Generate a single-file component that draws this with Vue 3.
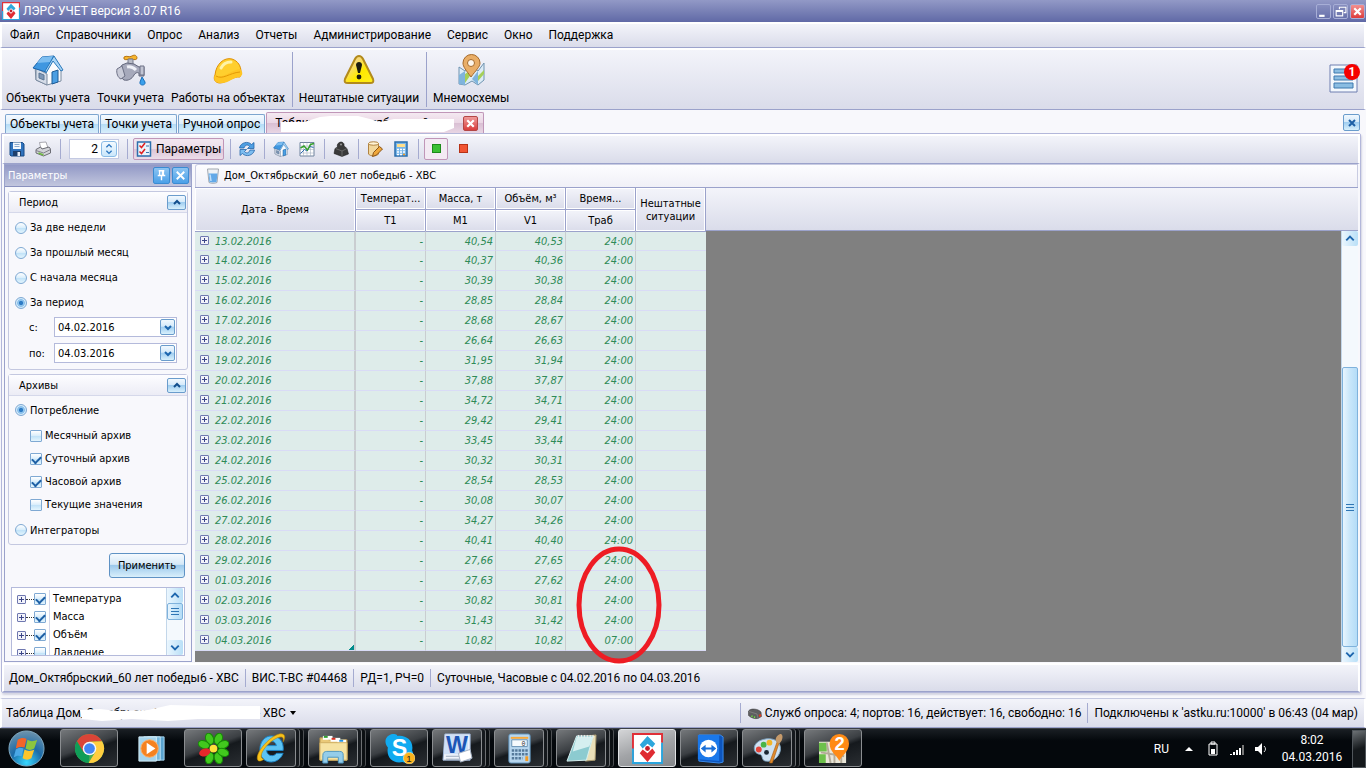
<script setup>
import { ref } from 'vue';

const menu = ['Файл', 'Справочники', 'Опрос', 'Анализ', 'Отчеты', 'Администрирование', 'Сервис', 'Окно', 'Поддержка'];

const tools = [
  { label: 'Объекты учета', icon: 'house' },
  { label: 'Точки учета', icon: 'tap' },
  { label: 'Работы на объектах', icon: 'helmet' },
  { label: 'Нештатные ситуации', icon: 'warning', sep: true },
  { label: 'Мнемосхемы', icon: 'map', sep: true },
];

const tabs = ['Объекты учета', 'Точки учета', 'Ручной опрос'];

const periods = ['За две недели', 'За прошлый месяц', 'С начала месяца', 'За период'];
const period = ref('За период');
const dateFrom = ref('04.02.2016');
const dateTo = ref('04.03.2016');

const kind = ref('consumption');
const archives = ref([
  { label: 'Месячный архив', on: false },
  { label: 'Суточный архив', on: true },
  { label: 'Часовой архив', on: true },
  { label: 'Текущие значения', on: false },
]);

const params = ref([
  { label: 'Температура', on: true },
  { label: 'Масса', on: true },
  { label: 'Объём', on: true },
  { label: 'Давление', on: false },
]);

const count = ref(2);

// date, M1, V1, working time
const rows = [
  ['13.02.2016', '40,54', '40,53', '24:00'],
  ['14.02.2016', '40,37', '40,36', '24:00'],
  ['15.02.2016', '30,39', '30,38', '24:00'],
  ['16.02.2016', '28,85', '28,84', '24:00'],
  ['17.02.2016', '28,68', '28,67', '24:00'],
  ['18.02.2016', '26,64', '26,63', '24:00'],
  ['19.02.2016', '31,95', '31,94', '24:00'],
  ['20.02.2016', '37,88', '37,87', '24:00'],
  ['21.02.2016', '34,72', '34,71', '24:00'],
  ['22.02.2016', '29,42', '29,41', '24:00'],
  ['23.02.2016', '33,45', '33,44', '24:00'],
  ['24.02.2016', '30,32', '30,31', '24:00'],
  ['25.02.2016', '28,54', '28,53', '24:00'],
  ['26.02.2016', '30,08', '30,07', '24:00'],
  ['27.02.2016', '34,27', '34,26', '24:00'],
  ['28.02.2016', '40,41', '40,40', '24:00'],
  ['29.02.2016', '27,66', '27,65', '24:00'],
  ['01.03.2016', '27,63', '27,62', '24:00'],
  ['02.03.2016', '30,82', '30,81', '24:00'],
  ['03.03.2016', '31,43', '31,42', '24:00'],
  ['04.03.2016', '10,82', '10,82', '07:00'],
];

const taskbar = [
  { name: 'Chrome', icon: 'chrome' },
  { name: 'Media Player', icon: 'media', idle: true },
  { name: 'ICQ', icon: 'icq' },
  { name: 'Internet Explorer', icon: 'ie', stack: true },
  { name: 'Проводник', icon: 'folder', stack: true },
  { name: 'Skype', icon: 'skype' },
  { name: 'Word', icon: 'word', stack: true },
  { name: 'Калькулятор', icon: 'calculator', stack: true },
  { name: 'Блокнот', icon: 'notepad', stack: true },
  { name: 'ЛЭРС УЧЕТ', icon: 'lers', active: true },
  { name: 'TeamViewer', icon: 'teamviewer' },
  { name: 'Paint', icon: 'paint', stack: true },
  { name: '2ГИС', icon: 'gis' },
];

// all icons are drawn on a 32x32 canvas
const icons = {
  house: '<path d="M3 12l1 14 11 5 14-4V15L22 4z" fill="#fafbfd" stroke="#7b8ba0"/><path d="M4 14v12l11 5V20z" fill="#d5dce8" stroke="#7b8ba0"/><path d="M10 3l12-1-8 16-13-4z" fill="#3f97e0" stroke="#1a64ab"/><path d="M10 3l11-1-3 6L5 9z" fill="#7cbdf0"/><path d="M22 2l9 14-2 1-8-10-7 12-1-2z" fill="#a9d5f6" stroke="#2877ba"/><path d="M20 18l6-2v12l-6 2z" fill="#4b9fe3" stroke="#1d5c97"/><path d="M7 19l5 2v5l-5-2z" fill="#7d97b6" stroke="#5d7795"/>',
  tap: '<path d="M9 3c3-2 5 1 8-1s5 0 5 2-3 2-5 1-6 2-8 0z" fill="#f7b52d" stroke="#b87510"/><path d="M13 5h5v6h-5z" fill="#b8bbc6" stroke="#777b8c"/><path d="M7 11l5-2 7 1 5 3h5v9h-5v-3c-2-1-4 0-5 2-2 4-6 6-10 5C5 24 4 15 7 11z" fill="#a6a9bb" stroke="#63677c"/><path d="M2 15l5-3 3 10-4 3C3 24 1 19 2 15z" fill="#c9cbd8" stroke="#6c7085"/><path d="M25 12l4 0v9h-4z" fill="#c2c5d3" stroke="#6c7085"/><path d="M12 13c4-1 7 1 9 3" stroke="#eef0f7" stroke-width="3" fill="none"/><path d="M27 23l3 5c1 4-6 4-5 0z" fill="#3aa0ec" stroke="#1770bb"/>',
  helmet: '<path d="M3 21C4 10 12 3 20 5c6 2 9 7 9 13l-1 5c-7-1-14 6-20 6-5 0-7-4-5-8z" fill="#ffcf2e" stroke="#e09000"/><path d="M3 21c7 5 14-4 25-6 3 3 3 6 0 8-7 0-12 7-20 6-5 0-7-4-5-8z" fill="#ffc524"/><path d="M4 22c7 4 13-3 24-4" stroke="#e39a07" fill="none"/><path d="M9 14c2-4 6-6 10-6" stroke="#fff3a8" stroke-width="3" fill="none" stroke-linecap="round"/>',
  warning: '<defs><linearGradient id="wg" x1="0" y1="0" x2="1" y2="1"><stop offset=".3" stop-color="#f7d977"/><stop offset=".6" stop-color="#ffe900"/><stop offset="1" stop-color="#ffee20"/></linearGradient></defs><path d="M16 2c2 0 3 1 4 3l10 20c1 3 0 4-3 4H5c-3 0-4-1-3-4L12 5c1-2 2-3 4-3z" fill="url(#wg)" stroke="#b28a1c" stroke-width="2"/><path d="M13 11c0-4 6-4 6 0l-2 8h-2z" fill="#1b1b10"/><circle cx="16" cy="23" r="2.4" fill="#1b1b10"/>',
  map: '<path d="M4 13l6 4 7-4 6 4 6-8v17l-6 5-6-4-7 4-6-1z" fill="#dcebf6" stroke="#6e93b0"/><path d="M4 21l6-4v14l-6-1zM17 25l6-8v14z" fill="#7fb4dc"/><path d="M10 20l7-5v4l-7 10zM23 22l6-6v4l-6 7z" fill="#a5cf58"/><path d="M16 23C11 16 8 13 8 9a8 8 0 0117 0c0 4-4 7-9 14z" fill="#e9ae68" stroke="#a56a2b"/><circle cx="16" cy="9" r="3.5" fill="#fdf6ec" stroke="#a56a2b"/>',
  save: '<path d="M2 3h25l3 3v24H4l-2-2z" fill="#2f72bd" stroke="#174a86" stroke-width="2"/><path d="M8 3h16v13H8z" fill="#f4f8fd"/><path d="M11 7h10M11 11h10" stroke="#8aa9cd" stroke-width="2"/><path d="M8 20h16v10H8z" fill="#1e3f6b"/><path d="M17 22h5v8h-5z" fill="#e8eef6"/>',
  print: '<path d="M9 3l13-1 4 12-14 3z" fill="#fff" stroke="#8d8d95" stroke-width="1.5"/><path d="M2 17l9-5 3 4 14-4 3 4v8l-14 6L2 24z" fill="#d2d3d8" stroke="#6c6d75" stroke-width="2"/><path d="M2 19l15 5 14-7" stroke="#80818a" stroke-width="2" fill="none"/><path d="M7 24l10 4" stroke="#6fba42" stroke-width="3"/>',
  check: '<path d="M3 2h26v28H3z" fill="#eaf3fb" stroke="#2d6fad" stroke-width="3"/><path d="M7 9l4 4 7-9M7 21l4 4 7-9" stroke="#e02020" stroke-width="3" fill="none"/><path d="M20 10h6M20 23h6" stroke="#3b74aa" stroke-width="2"/>',
  refresh: '<path d="M1 14C3 3 18-1 25 7l5-4v12H17l4-4c-4-5-9-3-11 3z" fill="#4f9fe2" stroke="#1f60a6" stroke-width="1.5"/><path d="M31 18C29 29 14 33 7 25l-5 4V17h13l-4 4c4 5 9 3 11-3z" fill="#7dbdf0" stroke="#1f60a6" stroke-width="1.5"/>',
  chart: '<path d="M2 3h28v27H2z" fill="#fff" stroke="#71849e" stroke-width="2"/><path d="M9 3v27M16 3v27M23 3v27M2 10h28M2 17h28M2 24h28" stroke="#9aa7b8"/><path d="M3 25l8-8 5 3 6-9 7 2" stroke="#2f6bb1" stroke-width="2" fill="none"/><path d="M3 14l7-4 7 8 6-11 7-2" stroke="#35a02c" stroke-width="3" fill="none"/>',
  weight: '<path d="M9 12c-2-6 3-10 8-10 4 1 6 4 5 8l6 5 3 11-13 5L2 25l2-10z" fill="#3a3a3a" stroke="#111"/><circle cx="16" cy="7" r="2" fill="#999"/><path d="M5 15l13 5 10-5M18 20v11" stroke="#777" stroke-width="1.500" fill="none"/>',
  dbedit: '<path d="M3 5v21c3 5 17 5 20 0V5z" fill="#f2d79b" stroke="#b18341" stroke-width="2"/><ellipse cx="13" cy="5" rx="10" ry="3.5" fill="#fff3d4" stroke="#b18341" stroke-width="2"/><path d="M13 23l12-12 6 5-12 12-8 3z" fill="#efa73a" stroke="#8a5418" stroke-width="2"/>',
  calc: '<path d="M4 2h24v28H4z" fill="#79b6e8" stroke="#2a6eac" stroke-width="3"/><path d="M8 6h16v6H8z" fill="#ffdf8c"/><path d="M8 17h4M14 17h4M20 17h4M8 22h4M14 22h4M20 22h4M8 27h4M14 27h4" stroke="#fff" stroke-width="3"/><path d="M20 27h4" stroke="#f59a22" stroke-width="3"/>',
  glass: '<path d="M5 2h22l-3 27c-3 2-13 2-16 0z" fill="#eef2f6" stroke="#a3a8b0" stroke-width="2"/><path d="M7 11h18l-2 17c-3 1-11 1-14 0z" fill="#62a9e8"/><path d="M10 13l2 13" stroke="#bfe0fb" stroke-width="3"/>',
  service: '<path d="M3 12c4-6 19-5 25 2l1 9-7 4c-7 1-14-1-19-6z" fill="#5e5e60" stroke="#333"/><path d="M4 13l16 5 2 9" stroke="#9a9a9a" fill="none"/><path d="M9 22l2 1M14 24l2 1" stroke="#6cf03c" stroke-width="3"/><path d="M24 22l4-2" stroke="#e23a1d" stroke-width="4"/>',
  chrome: '<circle cx="16" cy="16" r="15" fill="#4caf50"/><path d="M3 8.500A15 15 0 0129 8.500L16 9l-6.500 11z" fill="#db4437"/><path d="M29 8.500A15 15 0 0115 31l7-11.500L16 9z" fill="#ffcd40"/><path d="M3 8.500L10 20l6 3-1 8A15 15 0 013 8.500z" fill="#0f9d58"/><circle cx="16" cy="16" r="7" fill="#f6f6f6"/><circle cx="16" cy="16" r="5.500" fill="#4285f4"/>',
  media: '<path d="M12 4h17v24H12z" fill="#5aa3cf" stroke="#a9d6ef"/><path d="M8 4h17v24H8z" fill="#75b8dd" stroke="#bfe3f5"/><path d="M3 4h18v25H3z" fill="#a4d3ec" stroke="#d5edf8"/><circle cx="14" cy="16" r="9" fill="#f58220" stroke="#fbb069"/><path d="M11 10l9 6-9 6z" fill="#fff"/>',
  icq: '<g fill="#42c81e" stroke="#168a06"><ellipse cx="12" cy="6" rx="4" ry="6" transform="rotate(-20 12 6)"/><ellipse cx="21" cy="6" rx="4" ry="6" transform="rotate(20 21 6)"/><ellipse cx="12" cy="26" rx="4" ry="6" transform="rotate(20 12 26)"/><ellipse cx="21" cy="26" rx="4" ry="6" transform="rotate(-20 21 26)"/><ellipse cx="26" cy="12" rx="6" ry="4" transform="rotate(-20 26 12)"/><ellipse cx="26" cy="20" rx="6" ry="4" transform="rotate(20 26 20)"/><ellipse cx="6" cy="12" rx="6" ry="4" transform="rotate(20 6 12)"/></g><ellipse cx="7" cy="20" rx="6" ry="4" fill="#e5262b" transform="rotate(-20 7 20)"/><circle cx="16" cy="16" r="4" fill="#ffe13a"/>',
  ie: '<path d="M16 3c8 0 13 6 12 15H11c0 6 8 7 10 3h7c-5 13-24 12-24-4C4 9 9 3 16 3zm-5 10h10c-1-6-9-6-10 0z" fill="#5cc3f3" stroke="#1c84c6"/><path d="M3 29C-4 25 12 4 24 1c6-1 7 3 4 8 1-5-1-6-6-4C12 9 0 25 8 27c-2 2-4 2-5 2z" fill="#f8c21c" stroke="#b98400" stroke-width=".6"/>',
  folder: '<path d="M2 5h7l2 2h19v21H2z" fill="#e9c978" stroke="#b1904a"/><path d="M5 3h10v4H5z" fill="#fff"/><path d="M6 3h4v2H6z" fill="#30a030"/><path d="M13 5h10v4H13z" fill="#fff"/><path d="M14 5h4v2h-4z" fill="#d83020"/><path d="M20 7h9v4h-9z" fill="#fff"/><path d="M22 7h4v2h-4z" fill="#2090e0"/><path d="M2 10h28v18H2z" fill="#f6e3a2" stroke="#cfae62"/><path d="M5 31V23c0-3 2-4 4-4h13c3 0 4 1 4 4v8h-5v-6H10v6z" fill="#94cdea" stroke="#4e97c0"/>',
  skype: '<path d="M9 1c2 0 4 0 5 2 10-1 17 6 15 15 4 7-2 15-10 12C9 32 2 25 4 15-1 9 2 2 9 1z" fill="#11aaf0"/><text x="8" y="24" font-size="24" font-weight="bold" font-family="Liberation Sans, sans-serif" fill="#fff">S</text><circle cx="26" cy="26" r="6" fill="#fbb21c" stroke="#fff0b0" stroke-width=".6"/><text x="23" y="30" font-size="10" font-family="Liberation Sans, sans-serif" fill="#222">1</text>',
  word: '<path d="M3 1h26v27H1z" fill="#f0f4fb" stroke="#9db4d6"/><path d="M3 2h24v20H2z" fill="#cfe0f7"/><text x="4" y="21" font-size="24" font-weight="bold" font-family="Liberation Sans, sans-serif" fill="#1c55b5">W</text><path d="M4 24h14M4 27h14" stroke="#9aa9bd"/><path d="M17 21l12-4 2 9-12 4z" fill="#fff" stroke="#a2afc2"/>',
  calculator: '<rect x="5" y="1" width="22" height="30" rx="2" fill="#b7d6ee" stroke="#5b8db4"/><path d="M7 4h18v2H7z" fill="#f8a93a"/><path d="M8 7h16v7H8z" fill="#f6fafd" stroke="#6993b4"/><text x="18" y="13" font-size="7" font-family="Liberation Mono, monospace" fill="#333">0</text><path d="M8 18h17M8 22h17M8 26h11" stroke="#55799a" stroke-width="2.500" stroke-dasharray="2.500 1"/><path d="M22 24h3v5h-3z" fill="#f29b25"/>',
  notepad: '<path d="M13 4l18-2-1 26-10 1z" fill="#e9dfb8" stroke="#a99a70"/><path d="M11 3h17l-7 25-20 1z" fill="#8ccbd0" stroke="#d7eff0"/><path d="M11 4h17l-4 10-17 5z" fill="#d5eff0"/><path d="M13 2v3M16 2v3M19 2v3M22 2v3M25 2v3M28 2v3" stroke="#eee"/>',
  lers: '<path d="M1 1h30v30H1z" fill="#fff"/><path d="M1 31V1h30v9" stroke="#e03038" stroke-width="2" fill="none"/><path d="M1 16v15h30V10" stroke="#2ba5dd" stroke-width="2" fill="none"/><path d="M16 3l8 8-3 4-5-4-5 5-3-4z" fill="#2ea7dc"/><path d="M16 30l-8-9 3-4 5 4 5-5 3 4z" fill="#df2c32"/><circle cx="16" cy="16" r="2.500" fill="#c3202c"/>',
  teamviewer: '<path d="M5 2h22l3 2v26l-4 1-21-2z" fill="#0d55bd" stroke="#3a8cf0"/><path d="M4 2h22v27L4 27z" fill="#1a78ea"/><circle cx="15" cy="16" r="9" fill="#fff"/><path d="M7 16l5-4v3h6v-3l5 4-5 4v-3h-6v3z" fill="#1a6fd8"/>',
  paint: '<path d="M15 6c10-1 16 5 14 13-2 7-8 11-15 10-5-1-2-6-6-7-8-1-9-14 7-16z" fill="#cfe2f2" stroke="#7ea3c0"/><circle cx="7" cy="17" r="3" fill="#e2453b"/><circle cx="12" cy="12" r="3" fill="#49b446"/><circle cx="18" cy="10" r="3" fill="#f2b52b"/><circle cx="15" cy="20" r="2.500" fill="#1b2733"/><path d="M26 9l2 1-7 21-3 0z" fill="#e08a2b" stroke="#9c5613" stroke-width=".6"/><path d="M25 9c-2-4 2-8 5-8 3 2 1 8-2 10z" fill="#c59a6b"/>',
  gis: '<path d="M1 9h28v22H1z" fill="#e9e6d8"/><path d="M1 10h8v9H1zM1 22h7v9H1z" fill="#6dc04b"/><path d="M9 10l4 21M3 20l24 4M17 10v21M24 12v19" stroke="#b3aa98" stroke-width="2"/><path d="M22 29c-1-5-10-9-10-18a10 10 0 0120 0c0 9-9 13-10 18z" fill="#ff8a15"/><text x="17" y="18" font-size="19" font-weight="bold" font-family="Liberation Sans, sans-serif" fill="#fff">2</text>',
};
</script>

<template>
  <div class="desktop">
    <header class="titlebar">
      <svg class="i18" viewBox="0 0 32 32" v-html="icons.lers"></svg>
      <h1>ЛЭРС УЧЕТ версия 3.07 R16</h1>
      <button class="win" aria-label="Свернуть"><svg viewBox="0 0 12 12"><path d="M2 9h5v2H2z" fill="#fff" /></svg></button>
      <button class="win" aria-label="Восстановить"><svg viewBox="0 0 12 12"><path d="M5 4V2h6v5H9M2 5h6v5H2zM2 6h6" fill="none" stroke="#fff" /></svg></button>
      <button class="win red" aria-label="Закрыть"><svg viewBox="0 0 12 12"><path d="M3 3l6 6M9 3l-6 6" stroke="#fff" stroke-width="2" /></svg></button>
    </header>

    <nav class="menu bar">
      <button v-for="m in menu" :key="m">{{ m }}</button>
    </nav>

    <div class="tools bar">
      <button v-for="t in tools" :key="t.label" :class="{ sep: t.sep }">
        <svg viewBox="0 0 32 32" v-html="icons[t.icon]"></svg>
        <span>{{ t.label }}</span>
      </button>
      <button class="notices" aria-label="Уведомления">
        <svg viewBox="0 0 32 32">
          <path d="M2 4h27v27H2z" fill="#f3f8fd" stroke="#6f7fb0" />
          <path d="M6 8h19v4H6zM6 15h19v4H6zM6 22h19v5H6z" fill="#8abde2" stroke="#3c78ae" />
        </svg>
        <span class="badge">1</span>
      </button>
    </div>

    <div class="tabs">
      <button v-for="t in tabs" :key="t" class="tab">{{ t }}</button>
      <div class="tab active">
        <span>Таблица Дом_Октябрьский</span>
        <svg class="smear" viewBox="0 0 176 16"><path d="M1 6h23L40 1 50 0h28l12 3 10 3 14-3h60v9l-10 4H1z" fill="#fff" /></svg>
        <button class="close" aria-label="Закрыть вкладку"><svg viewBox="0 0 12 12"><path d="M3 3l6 6M9 3l-6 6" stroke="#fff" stroke-width="2" /></svg></button>
      </div>
      <button class="blue-btn closeall" aria-label="Закрыть"><svg viewBox="0 0 12 12"><path d="M3 3l6 6M9 3l-6 6" stroke="#1d5fa5" stroke-width="2" /></svg></button>
    </div>

    <main class="doc">
      <div class="docbar bar">
        <button class="ib" aria-label="Сохранить"><svg viewBox="0 0 32 32" v-html="icons.save"></svg></button>
        <button class="ib" aria-label="Печать"><svg viewBox="0 0 32 32" v-html="icons.print"></svg></button>
        <i class="vsep"></i>
        <div class="spin">
          <input v-model="count" aria-label="Количество">
          <button aria-label="Изменить"><svg viewBox="0 0 12 16"><path d="M3 6l3-3 3 3M3 10l3 3 3-3" fill="none" stroke="#2a74bd" stroke-width="1.5" /></svg></button>
        </div>
        <i class="vsep"></i>
        <button class="pressed"><svg class="i16" viewBox="0 0 32 32" v-html="icons.check"></svg>Параметры</button>
        <i class="vsep"></i>
        <button class="ib" aria-label="Обновить"><svg viewBox="0 0 32 32" v-html="icons.refresh"></svg></button>
        <i class="vsep"></i>
        <button class="ib" aria-label="Объект"><svg viewBox="0 0 32 32" v-html="icons.house"></svg></button>
        <button class="ib" aria-label="График"><svg viewBox="0 0 32 32" v-html="icons.chart"></svg></button>
        <i class="vsep"></i>
        <button class="ib" aria-label="Баланс"><svg viewBox="0 0 32 32" v-html="icons.weight"></svg></button>
        <i class="vsep"></i>
        <button class="ib" aria-label="Правка"><svg viewBox="0 0 32 32" v-html="icons.dbedit"></svg></button>
        <button class="ib" aria-label="Расчет"><svg viewBox="0 0 32 32" v-html="icons.calc"></svg></button>
        <i class="vsep"></i>
        <button class="pressed sq" aria-label="Старт"><b class="lamp green"></b></button>
        <button class="ib" aria-label="Стоп"><b class="lamp"></b></button>
      </div>

      <div class="body">
        <aside class="side">
          <div class="side-head">
            <h2>Параметры</h2>
            <button aria-label="Закрепить"><svg viewBox="0 0 16 16"><path d="M5 3h6M6 3v5M10 3v5M9 3v5M4 8h8M8 8v5" stroke="#fff" stroke-width="1.5" /></svg></button>
            <button aria-label="Закрыть панель"><svg viewBox="0 0 16 16"><path d="M4 4l8 8M12 4l-8 8" stroke="#fff" stroke-width="2" /></svg></button>
          </div>

          <section class="group">
            <h3>Период<button class="blue-btn" aria-label="Свернуть период"><svg viewBox="0 0 12 12"><path d="M3 8l3-3 3 3" fill="none" stroke="#134f8d" stroke-width="2" /></svg></button></h3>
            <div class="periods">
              <label v-for="p in periods" :key="p"><input type="radio" name="period" :value="p" v-model="period">{{ p }}</label>
            </div>
            <div class="date">
              <label for="from">с:</label>
              <div class="combo"><input id="from" v-model="dateFrom"><button class="blue-btn" aria-label="Выбрать дату начала"><svg viewBox="0 0 12 12"><path d="M3 5l3 3 3-3" fill="none" stroke="#1d66ae" stroke-width="2" /></svg></button></div>
            </div>
            <div class="date">
              <label for="to">по:</label>
              <div class="combo"><input id="to" v-model="dateTo"><button class="blue-btn" aria-label="Выбрать дату конца"><svg viewBox="0 0 12 12"><path d="M3 5l3 3 3-3" fill="none" stroke="#1d66ae" stroke-width="2" /></svg></button></div>
            </div>
          </section>

          <section class="group">
            <h3>Архивы<button class="blue-btn" aria-label="Свернуть архивы"><svg viewBox="0 0 12 12"><path d="M3 8l3-3 3 3" fill="none" stroke="#134f8d" stroke-width="2" /></svg></button></h3>
            <div class="archives">
              <label><input type="radio" name="kind" value="consumption" v-model="kind">Потребление</label>
              <div class="checks">
                <label v-for="a in archives" :key="a.label"><input type="checkbox" v-model="a.on">{{ a.label }}</label>
              </div>
              <label><input type="radio" name="kind" value="integrators" v-model="kind">Интеграторы</label>
            </div>
          </section>

          <button class="apply">Применить</button>

          <div class="tree">
            <div class="tree-rows">
              <div v-for="p in params" :key="p.label" class="tree-row">
                <i class="plus"></i><i class="dots"></i>
                <label><input type="checkbox" v-model="p.on"><span>{{ p.label }}</span></label>
              </div>
            </div>
            <div class="scroll">
              <svg class="arrow" viewBox="0 0 16 16"><path d="M4 10l4-4 4 4" fill="none" stroke="#1d66ae" stroke-width="2" /></svg>
              <div class="thumb short"></div>
              <svg class="arrow last" viewBox="0 0 16 16"><path d="M4 6l4 4 4-4" fill="none" stroke="#1d66ae" stroke-width="2" /></svg>
            </div>
          </div>
        </aside>

        <section class="view">
          <div class="caption"><svg class="i16" viewBox="0 0 32 32" v-html="icons.glass"></svg>Дом_Октябрьский_60 лет победы6 - ХВС</div>
          <div class="grid">
            <table>
              <colgroup>
                <col class="c-date"><col v-for="n in 5" :key="n" class="c-val">
              </colgroup>
              <thead>
                <tr>
                  <th rowspan="2">Дата - Время</th>
                  <th>Температ...</th>
                  <th>Масса, т</th>
                  <th>Объём, м³</th>
                  <th>Время...</th>
                  <th rowspan="2">Нештатные ситуации</th>
                </tr>
                <tr>
                  <th>Т1</th>
                  <th>М1</th>
                  <th>V1</th>
                  <th>Траб</th>
                </tr>
              </thead>
              <tbody>
                <tr v-for="r in rows" :key="r[0]">
                  <td><i class="plus"></i>{{ r[0] }}</td>
                  <td>-</td>
                  <td>{{ r[1] }}</td>
                  <td>{{ r[2] }}</td>
                  <td>{{ r[3] }}</td>
                  <td></td>
                </tr>
              </tbody>
            </table>
            <div class="rest">
              <div class="rest-head"></div>
              <div class="scroll">
                <svg class="arrow" viewBox="0 0 16 16"><path d="M4 10l4-4 4 4" fill="none" stroke="#1d66ae" stroke-width="2" /></svg>
                <div class="track"></div>
                <div class="thumb"></div>
                <svg class="arrow" viewBox="0 0 16 16"><path d="M4 6l4 4 4-4" fill="none" stroke="#1d66ae" stroke-width="2" /></svg>
              </div>
            </div>
            <!-- hand-drawn mark round the last working hours -->
            <svg class="mark" viewBox="0 0 86 118"><ellipse cx="43" cy="59" rx="40" ry="56" fill="none" stroke="#ee1c24" stroke-width="5" /></svg>
          </div>
        </section>
      </div>

      <div class="info bar">
        <span>Дом_Октябрьский_60 лет победы6 - ХВС</span>
        <span>ВИС.Т-ВС #04468</span>
        <span>РД=1, РЧ=0</span>
        <span>Суточные, Часовые с 04.02.2016 по 04.03.2016</span>
      </div>
    </main>

    <footer class="status bar">
      <button class="current">
        <span>Таблица Дом_Октябрьский_60 лет победы6 - ХВС</span>
        <svg class="blot" viewBox="0 0 182 16"><path d="M0 5l20-1 18 2 30-1 22-5 42 1 48 0v13l-32 0-30 0-30 2-36-2-30 2-20-2z" fill="#fff" /></svg>
        <svg class="drop" viewBox="0 0 6 4"><path d="M0 0h6L3 4z" /></svg>
      </button>
      <span class="services"><svg class="i16" viewBox="0 0 32 32" v-html="icons.service"></svg>Служб опроса: 4; портов: 16, действует: 16, свободно: 16</span>
      <span class="conn">Подключены к 'astku.ru:10000' в 06:43 (04 мар)</span>
    </footer>

    <div class="taskbar">
      <button class="start" aria-label="Пуск">
        <svg viewBox="0 0 40 40">
          <defs>
            <radialGradient id="orb" cx=".5" cy=".9" r=".9"><stop offset="0" stop-color="#38d8ff" /><stop offset=".5" stop-color="#1b6ba8" /><stop offset="1" stop-color="#6f93ac" /></radialGradient>
          </defs>
          <circle cx="20" cy="20" r="18" fill="url(#orb)" stroke="#7fa9c0" />
          <path d="M11 11c3-2 6-2 9-1l-2 9c-3-1-6-1-9 1z" fill="#f2652a" />
          <path d="M21 11c3 2 6 2 10 0l-3 9c-3 2-6 2-9 0z" fill="#8cc63e" />
          <path d="M9 21c3-2 5-2 8-1l-2 8c-3-1-5-1-8 1z" fill="#4ba8e6" />
          <path d="M18 21c3 2 6 2 10 0l-3 9c-3 2-6 2-9 0z" fill="#fdc52c" />
        </svg>
      </button>
      <div class="apps">
        <button v-for="t in taskbar" :key="t.name" :aria-label="t.name" :class="{ idle: t.idle, stack: t.stack, active: t.active }">
          <svg viewBox="0 0 32 32" v-html="icons[t.icon]"></svg>
        </button>
      </div>
      <div class="tray">
        <span>RU</span>
        <svg class="up" viewBox="0 0 8 5"><path d="M0 5l4-4 4 4z" fill="#fff" /></svg>
        <svg viewBox="0 0 16 16"><path d="M4 3h8v11H4zM6 1h4v2H6z" fill="none" stroke="#fff" /><path d="M6 8h4v5H6z" fill="#fff" /></svg>
        <svg viewBox="0 0 16 16"><path d="M1 13h2v1H1zM4 11h2v3H4zM7 9h2v5H7zM10 7h2v7h-2z" fill="#fff" /><path d="M13 4h2v10h-2z" fill="#777" /></svg>
        <svg viewBox="0 0 16 16"><path d="M2 6h3l4-4v12l-4-4H2z" fill="#fff" /><path d="M11 5c2 2 2 4 0 6" fill="none" stroke="#ddd" /></svg>
        <div class="clock"><span>8:02</span><span>04.03.2016</span></div>
        <button class="peek" aria-label="Свернуть все окна"></button>
      </div>
    </div>
  </div>
</template>

<style>
body {
  background: #f8f8fc;
}
</style>

<style scoped>
.desktop {
  --line: #9ba2cb;
  --ui: Roboto, "Open Sans", sans-serif;
  --small: "DejaVu Sans Condensed", "DejaVu Sans", sans-serif;
  display: flex;
  flex-direction: column;
  min-height: 100vh;
  background: #f8f8fc;
  color: #000;
  font-family: var(--ui);
  font-size: 12px;
}
* {
  box-sizing: border-box;
}
button {
  border: 0;
  padding: 0;
  background: none;
  color: inherit;
  font: inherit;
  white-space: nowrap;
}
input {
  font: inherit;
  color: inherit;
  margin: 0;
}
h1, h2, h3 {
  margin: 0;
  font-weight: normal;
}
svg {
  display: block;
  flex: none;
}
.i16 {
  width: 16px;
  height: 16px;
}
.i18 {
  width: 18px;
  height: 18px;
}
.bar {
  border: 2px solid #fff;
  border-bottom: 1px solid var(--line);
  background: linear-gradient(#f3f4fa, #dadcea);
}

/* title */
.titlebar {
  display: flex;
  align-items: center;
  gap: 2px;
  height: 22px;
  padding: 0 1px 0 2px;
  background: linear-gradient(#9299c6, #6069a6);
  color: #fff;
}
.titlebar h1 {
  flex: 1;
  padding-left: 1px;
  font-size: 12px;
}
.win {
  width: 15px;
  height: 15px;
  border: 1px solid #a7aed6;
  border-radius: 2px;
}
.win svg {
  width: 13px;
  height: 13px;
}
.win.red {
  background: linear-gradient(#f29090, #dd3c3c);
}
.menu {
  display: flex;
  align-items: center;
  gap: 16px;
  height: 26px;
  padding: 0 0 2px 8px;
}

/* big toolbar */
.tools {
  display: flex;
  height: 62px;
  padding-left: 4px;
  gap: 7px;
}
.tools > button {
  display: flex;
  flex-direction: column;
  align-items: center;
  gap: 5px;
  padding-top: 4px;
}
.tools > button svg {
  width: 32px;
  height: 32px;
}
.tools > .sep {
  border-left: 1px solid var(--line);
  padding-left: 6px;
  margin: 2px 0;
  padding-top: 2px;
}
.tools > .notices {
  position: relative;
  margin-left: auto;
  margin-right: 4px;
  padding-top: 11px;
}
.badge {
  position: absolute;
  top: 14px;
  right: 0;
  width: 16px;
  height: 16px;
  border-radius: 8px;
  background: #f60000;
  color: #fff;
  font-size: 12px;
  font-weight: bold;
  line-height: 16px;
  text-align: center;
}

/* tabs */
.tabs {
  display: flex;
  align-items: flex-end;
  gap: 1px;
  height: 23px;
  padding: 0 6px 0 5px;
}
.tab {
  height: 19px;
  padding: 0 4px;
  border: 1px solid #7da5cf;
  border-bottom: 0;
  border-radius: 2px 2px 0 0;
  background: linear-gradient(#f4faff, #dcedfb 50%, #b5dcf6 51%, #d8eefb);
}
.tab.active {
  position: relative;
  display: flex;
  align-items: center;
  justify-content: space-between;
  width: 218px;
  height: 21px;
  padding: 0 5px 0 8px;
  border-color: #c096b8;
  background: linear-gradient(#f4e9f1, #ead6e4 50%, #d9bfd3 51%, #e8d6e4);
  white-space: nowrap;
}
.smear {
  position: absolute;
  top: 3px;
  left: 13px;
  width: 176px;
  height: 16px;
}
.close {
  width: 15px;
  height: 15px;
  border: 1px solid #b34646;
  border-radius: 2px;
  background: linear-gradient(#ef9a9a, #d93c3c);
}
.blue-btn {
  border: 1px solid #6a9ccc;
  border-radius: 2px;
  background: linear-gradient(#f1f8fe, #d5eafa 45%, #9fcdf0 50%, #d8f0fc);
}
.closeall {
  width: 17px;
  height: 17px;
  margin: 0 0 2px auto;
}

/* document */
.doc {
  flex: 1;
  display: flex;
  flex-direction: column;
  margin: 0 5px 5px 1px;
  border: 1px solid #b3b7da;
  border-radius: 0 2px 2px 2px;
  box-shadow: 1px 2px 2px #d3d4e2;
}
.docbar {
  display: flex;
  align-items: center;
  gap: 4px;
  height: 30px;
  padding: 0 0 2px 2px;
}
.ib {
  display: flex;
  align-items: center;
  justify-content: center;
  width: 22px;
  height: 22px;
}
.ib svg {
  width: 16px;
  height: 16px;
}
.vsep {
  width: 1px;
  height: 20px;
  margin: 0 1px 0 2px;
  background: #a5abd0;
}
.spin {
  display: flex;
  width: 50px;
  height: 20px;
  margin: 0 2px 0 3px;
  border: 1px solid #c3c9e2;
  background: #fff;
}
.spin input {
  width: 30px;
  border: 0;
  padding: 0 2px;
  background: none;
  text-align: right;
}
.spin button {
  width: 16px;
  margin: 1px;
  border: 1px solid #8bbce6;
  border-radius: 3px;
  background: linear-gradient(#f3faff, #cbe7fb);
}
.spin svg {
  width: 14px;
  height: 14px;
}
.pressed {
  display: flex;
  align-items: center;
  justify-content: center;
  gap: 4px;
  height: 22px;
  padding: 0 2px;
  border: 1px solid #c096b8;
  border-radius: 2px;
  background: linear-gradient(#f2e7f0, #ebdce8 50%, #dcc5d7 51%, #ecdde9);
}
.pressed.sq {
  width: 24px;
  background: #f3eaf3;
}
.lamp {
  width: 9px;
  height: 9px;
  border: 1px solid #b73216;
  background: #f15533;
}
.lamp.green {
  border-color: #1d8a1a;
  background: #3bc034;
}
.body {
  flex: 1;
  display: flex;
  gap: 3px;
  padding: 0 2px;
}

/* side panel */
.side {
  display: flex;
  flex-direction: column;
  width: 188px;
  border: 1px solid var(--line);
  background: #f8f8fc;
  font-family: var(--small);
  font-size: 11px;
}
.side-head {
  display: flex;
  align-items: center;
  gap: 2px;
  height: 22px;
  padding: 0 2px 0 3px;
  border-bottom: 1px solid #8990be;
  background: linear-gradient(#9299c6, #c2c6de);
  color: #fff;
}
.side-head h2 {
  flex: 1;
  font-size: 11px;
}
.side-head button {
  width: 17px;
  height: 17px;
  border: 1px solid #3b8bd2;
  border-radius: 2px;
  background: linear-gradient(#8cc4f2, #4ba0e8);
}
.group {
  margin: 4px 3px 0;
  padding-bottom: 4px;
  border: 1px solid #c4c8e0;
  border-radius: 3px;
}
.group + .group {
  padding-bottom: 0;
}
.group h3 {
  display: flex;
  align-items: center;
  justify-content: space-between;
  height: 21px;
  padding: 0 1px 0 10px;
  border-bottom: 1px solid #d5d8ea;
  background: linear-gradient(#fdfdff, #ececf5);
  font-size: 11px;
}
.group h3 .blue-btn {
  display: flex;
  align-items: center;
  justify-content: center;
  width: 19px;
  height: 15px;
}
.blue-btn svg {
  width: 12px;
  height: 12px;
  margin: 0 auto;
}
label {
  display: flex;
  align-items: center;
  gap: 3px;
}
.periods {
  padding: 2px 0 0 6px;
}
.periods label {
  height: 25px;
}
input[type="radio"],
input[type="checkbox"] {
  appearance: none;
  flex: none;
  width: 12px;
  height: 12px;
  border: 1px solid #7fa9d3;
  border-radius: 6px;
  background: linear-gradient(#fff, #d8edfb 50%, #c0e2f8 51%, #e4f5fd);
}
input[type="checkbox"] {
  border-radius: 1px;
}
input[type="radio"]:checked {
  background: radial-gradient(#2f7cc5 0 25%, #8dc2ec 35% 50%, #d3eafa 60%);
}
input[type="checkbox"]:checked::after {
  content: "";
  display: block;
  width: 7px;
  height: 4px;
  margin: 2px 0 0 1px;
  border: solid #1d5fa5;
  border-width: 0 0 2px 2px;
  transform: rotate(-45deg);
}
.date {
  display: flex;
  align-items: center;
  height: 24px;
  padding-left: 20px;
}
.date + .date {
  margin-top: 2px;
}
.date label {
  width: 25px;
}
.combo {
  display: flex;
  width: 123px;
  height: 20px;
  border: 1px solid #b4badb;
  background: #fff;
}
.combo input {
  flex: 1;
  min-width: 0;
  border: 0;
  padding: 0 3px;
}
.combo button {
  width: 15px;
  margin: 1px;
}
.archives {
  padding: 2px 0 2px 6px;
}
.archives > label {
  height: 24px;
}
.checks {
  padding: 2px 0 2px 15px;
}
.checks label {
  height: 23px;
}
.apply {
  align-self: flex-end;
  width: 76px;
  height: 25px;
  margin: 8px 6px 9px 0;
  border: 1px solid #5f92c4;
  border-radius: 3px;
  background: linear-gradient(#f5fafe, #d5e8f7 45%, #9cc9ec 50%, #d9effb);
}
.tree {
  display: flex;
  height: 69px;
  margin: 0 6px 0 6px;
  padding-right: 1px;
  border: 1px solid #b4badb;
  background: #fff;
  overflow: hidden;
}
.tree-rows {
  flex: 1;
  padding-top: 2px;
}
.tree-row {
  display: flex;
  align-items: center;
  height: 18px;
  padding-left: 5px;
}
.tree-row .dots {
  width: 8px;
  border-top: 1px dotted #333;
}
.tree-row span {
  padding-left: 3px;
  border-left: 1px solid #d5d8ea;
  line-height: 18px;
}
.plus {
  display: inline-block;
  width: 9px;
  height: 9px;
  border: 1px solid #6f78b0;
  border-radius: 1px;
  background:
    linear-gradient(#3c4688, #3c4688) center / 5px 1px no-repeat,
    linear-gradient(#3c4688, #3c4688) center / 1px 5px no-repeat,
    #f2f3fa;
}
.scroll {
  display: flex;
  flex-direction: column;
  width: 17px;
  border-left: 1px solid #c3d7ea;
  background: #f4f9fd;
}
.arrow {
  width: 16px;
  height: 15px;
  border-radius: 2px;
  background: linear-gradient(90deg, #eaf6fe, #b9dff7);
}
.arrow.last {
  margin-top: auto;
}
.thumb {
  flex: 280;
  border: 1px solid #7fb2dc;
  border-radius: 2px;
  background:
    repeating-linear-gradient(#2f76b5 0 1px, transparent 1px 3px) center / 8px 7px no-repeat,
    linear-gradient(90deg, #e8f5fe, #c8e6fa 50%, #b4dcf7);
}
.thumb.short {
  flex: 0 0 17px;
}
.track {
  flex: 122;
}

/* data grid */
.view {
  flex: 1;
  display: flex;
  flex-direction: column;
  min-width: 0;
  font-family: var(--small);
  font-size: 11px;
}
.caption {
  display: flex;
  align-items: center;
  gap: 3px;
  height: 23px;
  padding: 0 0 1px 9px;
  border: 1px solid #c9cce2;
  border-bottom: 0;
  border-radius: 3px 0 0;
  background: linear-gradient(#fdfdff, #f0f0f7);
}
.grid {
  position: relative;
  flex: 1;
  display: flex;
  align-items: flex-start;
  padding-bottom: 11px;
  background: #808080;
}
table {
  width: 511px;
  table-layout: fixed;
  border-collapse: separate;
  border-spacing: 0;
}
.c-date {
  width: 161px;
}
.c-val {
  width: 70px;
}
th {
  height: 22px;
  padding: 0;
  border: 1px solid var(--line);
  border-width: 1px 1px 0 0;
  background: linear-gradient(#f3f4fa, #dadcea);
  box-shadow: inset 0 0 0 1px #fff;
  font-weight: normal;
  line-height: 13px;
}
tbody tr:first-child td {
  border-top: 1px solid var(--line);
}
td {
  height: 20px;
  padding: 0 2px 0 0;
  border: solid;
  border-width: 0 1px 1px 0;
  border-color: #d5d5f2 #c9cdd0 #d9dbf6;
  background: #deecea;
  color: #2e8b57;
  font-style: italic;
  text-align: right;
}
td:first-child {
  padding-left: 5px;
  border-right: 2px solid #c9cdd0;
  text-align: left;
}
td:first-child .plus {
  margin-right: 6px;
}
td:last-child {
  border-right: 0;
}
tr:last-child td:first-child {
  background: linear-gradient(135deg, #deecea 50%, #008b8b 50%) right bottom / 6px 6px no-repeat #deecea;
}
.rest {
  flex: 1;
  align-self: stretch;
  display: flex;
  flex-direction: column;
  margin-bottom: -11px;
}
.rest-head {
  height: 44px;
  border: solid var(--line);
  border-width: 1px 0;
  background: linear-gradient(#f3f4fa, #dadcea);
}
.rest .scroll {
  flex: 1;
  align-self: flex-end;
}
.mark {
  position: absolute;
  left: 381px;
  top: 359px;
  width: 86px;
  height: 118px;
  z-index: 1;
}

.info {
  display: flex;
  align-items: center;
  height: 29px;
  margin-top: 1px;
}
.info span {
  padding: 0 6px;
  line-height: 18px;
  border-right: 1px solid #a5abd0;
}
.info span:first-child {
  padding-left: 5px;
}
.info span:last-child {
  border: 0;
}
.status {
  display: flex;
  align-items: center;
  height: 30px;
  border-top: 1px solid #c4c8e0;
}
.current {
  position: relative;
  display: flex;
  align-items: center;
  margin-right: auto;
  padding-left: 4px;
}
.blot {
  position: absolute;
  left: 78px;
  width: 182px;
  height: 16px;
}
.drop {
  width: 6px;
  height: 4px;
  margin-left: 4px;
}
.services,
.conn {
  display: flex;
  align-items: center;
  gap: 2px;
  padding: 0 6px;
  border-left: 1px solid #a5abd0;
  line-height: 20px;
}

/* taskbar */
.taskbar {
  display: flex;
  height: 40px;
  border-top: 1px solid #3b3f45;
  background: linear-gradient(#1a1f24, #04080c 30%);
}
.start {
  width: 60px;
  padding-left: 7px;
}
.start svg {
  width: 39px;
  height: 39px;
}
.apps {
  display: flex;
  gap: 4px;
  flex: 1;
}
.apps button {
  display: flex;
  align-items: center;
  justify-content: center;
  width: 58px;
  height: 38px;
  border: 1px solid #8a8d90;
  border-radius: 3px;
  background: linear-gradient(160deg, #75787b, #3b3f43 45%, #15191d 55%, #2a2e32);
}
.apps svg {
  width: 31px;
  height: 31px;
}
.apps .idle {
  border-color: transparent;
  background: none;
}
.apps .stack {
  width: 50px;
  margin-right: 8px;
  box-shadow: 3px 0 0 #15191d, 4px 0 0 #6c6f72, 7px 0 0 #0c1013, 8px 0 0 #4c4f52;
}
.apps .active {
  border-color: #e0e2e4;
  background: linear-gradient(160deg, #d4d5d7, #a2a4a7 50%, #84878a);
}
.tray {
  display: flex;
  align-items: center;
  gap: 8px;
  color: #fff;
}
.tray svg {
  width: 16px;
  height: 16px;
}
.tray .up {
  width: 8px;
  height: 5px;
  margin: 0 4px 0 8px;
}
.clock {
  display: flex;
  flex-direction: column;
  align-items: center;
  width: 64px;
  margin-left: 3px;
  line-height: 17px;
}
.peek {
  width: 14px;
  height: 38px;
  border: 1px solid #50565b;
  background: linear-gradient(160deg, #6c7175, #14181b 50%);
}
</style>
